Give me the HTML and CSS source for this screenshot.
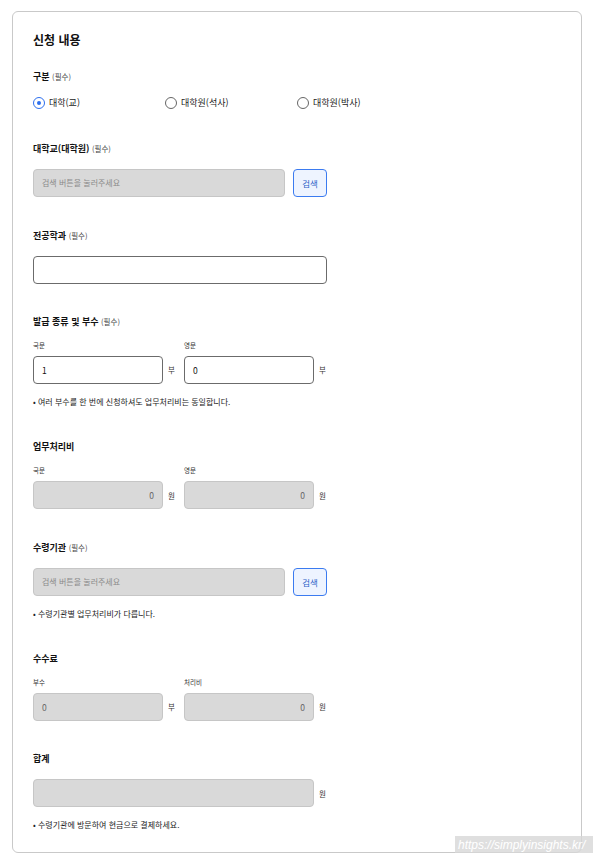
FILE: index.html
```html
<!DOCTYPE html>
<html lang="ko">
<head>
<meta charset="utf-8">
<title>신청 내용</title>
<link rel="stylesheet" href="styles.css">
</head>
<body>
<div class="card">
  <h2 class="title">신청 내용</h2>

  <section class="section">
    <div class="label">구분 <span class="req">(필수)</span></div>
    <div class="radios">
      <label class="radio"><span class="dot checked"></span>대학(교)</label>
      <label class="radio"><span class="dot"></span>대학원(석사)</label>
      <label class="radio"><span class="dot"></span>대학원(박사)</label>
    </div>
  </section>

  <section class="section">
    <div class="label mb">대학교(대학원) <span class="req">(필수)</span></div>
    <div class="search-row">
      <div class="input disabled wide placeholder">검색 버튼을 눌러주세요</div>
      <button class="btn">검색</button>
    </div>
  </section>

  <section class="section">
    <div class="label mb">전공학과 <span class="req">(필수)</span></div>
    <div class="input full"></div>
  </section>

  <section class="section">
    <div class="label">발급 종류 및 부수 <span class="req">(필수)</span></div>
    <div class="pair">
      <div class="col">
        <div class="sub">국문</div>
        <div class="with-unit"><div class="input small">1</div><span class="unit">부</span></div>
      </div>
      <div class="col">
        <div class="sub">영문</div>
        <div class="with-unit"><div class="input small">0</div><span class="unit">부</span></div>
      </div>
    </div>
    <p class="note">• 여러 부수를 한 번에 신청하셔도 업무처리비는 동일합니다.</p>
  </section>

  <section class="section">
    <div class="label">업무처리비</div>
    <div class="pair">
      <div class="col">
        <div class="sub">국문</div>
        <div class="with-unit"><div class="input small disabled right">0</div><span class="unit">원</span></div>
      </div>
      <div class="col">
        <div class="sub">영문</div>
        <div class="with-unit"><div class="input small disabled right">0</div><span class="unit">원</span></div>
      </div>
    </div>
  </section>

  <section class="section">
    <div class="label mb">수령기관 <span class="req">(필수)</span></div>
    <div class="search-row">
      <div class="input disabled wide placeholder">검색 버튼을 눌러주세요</div>
      <button class="btn">검색</button>
    </div>
    <p class="note">• 수령기관별 업무처리비가 다릅니다.</p>
  </section>

  <section class="section">
    <div class="label">수수료</div>
    <div class="pair">
      <div class="col">
        <div class="sub">부수</div>
        <div class="with-unit"><div class="input small disabled">0</div><span class="unit">부</span></div>
      </div>
      <div class="col">
        <div class="sub">처리비</div>
        <div class="with-unit"><div class="input small disabled right">0</div><span class="unit">원</span></div>
      </div>
    </div>
  </section>

  <section class="section last">
    <div class="label mb">합계</div>
    <div class="with-unit"><div class="input total disabled"></div><span class="unit">원</span></div>
    <p class="note">• 수령기관에 방문하여 현금으로 결제하세요.</p>
  </section>

  <div class="watermark">https://simplyinsights.kr/</div>
</div>
</body>
</html>
```

FILE: styles.css
```css
* { box-sizing: border-box; }
html, body { margin: 0; padding: 0; background: #fff; }
body {
  padding: 11px 13px 0 12px;
  font-family: "Noto Sans CJK KR", "Noto Sans", sans-serif;
  color: #111;
}
.card {
  position: relative;
  width: 570px;
  border: 1px solid #c9c9c9;
  border-radius: 6px;
  padding: 20px 20px 20px 20px;
}
.title {
  margin: 0 0 23px;
  font-size: 12px;
  line-height: 16px;
  font-weight: 700;
}
.section { margin-bottom: 32.33px; }
.section.last { margin-bottom: 0; }
.label {
  font-size: 9px;
  line-height: 12px;
  font-weight: 700;
  margin-bottom: 12px;
}
.label.mb { margin-bottom: 14px; }
.req { font-size: 7.5px; font-weight: 400; color: #444; }
.radios { display: flex; height: 16px; align-items: center; margin-top: 1px; }
.radio {
  width: 132px;
  display: flex;
  align-items: center;
  gap: 4px;
  font-size: 9px;
  line-height: 16px;
  color: #222;
}
.dot {
  width: 12px; height: 12px;
  border: 1px solid #666;
  border-radius: 50%;
  display: flex; align-items: center; justify-content: center;
}
.dot.checked { border-color: #2d6fee; }
.dot.checked::after {
  content: ""; width: 4px; height: 4px; border-radius: 50%; background: #2d6fee;
}
.search-row { display: flex; gap: 8px; }
.input {
  height: 28px;
  border: 1px solid #6b6b6b;
  border-radius: 4px;
  background: #fff;
  font-size: 8.5px;
  line-height: 26px;
  padding: 0 8px;
  color: #111;
}
.input.disabled { background: #d9d9d9; border-color: #c6c6c6; color: #666; }
.input.placeholder { color: #8a8a8a; font-size: 8px; }
.input.right { text-align: right; }
.wide { width: 252px; }
.full { width: 294px; }
.small { width: 130px; }
.total { width: 281px; }
.btn {
  width: 34px; height: 28px;
  border: 1px solid #3b7bf0;
  background: #eef4ff;
  color: #2b5fc7;
  border-radius: 4px;
  font-family: inherit;
  font-size: 8.5px;
  padding: 0;
}
.pair { display: flex; }
.col { width: 151px; }
.sub {
  font-size: 6.5px;
  line-height: 10px;
  color: #333;
  margin-bottom: 6px;
}
.with-unit { display: flex; align-items: center; }
.unit { font-size: 7.5px; color: #333; margin-left: 5px; }
.note {
  margin: 11px 0 0;
  font-size: 8px;
  line-height: 14px;
  color: #222;
}
.watermark {
  position: absolute;
  right: -12px;
  bottom: -2px;
  width: 138px;
  height: 18px;
  overflow: hidden;
  white-space: nowrap;
  background: rgba(215, 215, 215, 0.8);
  color: #fff;
  font-family: "Liberation Sans", sans-serif;
  font-style: italic;
  font-size: 12px;
  line-height: 18px;
  padding-left: 3px;
}
```
